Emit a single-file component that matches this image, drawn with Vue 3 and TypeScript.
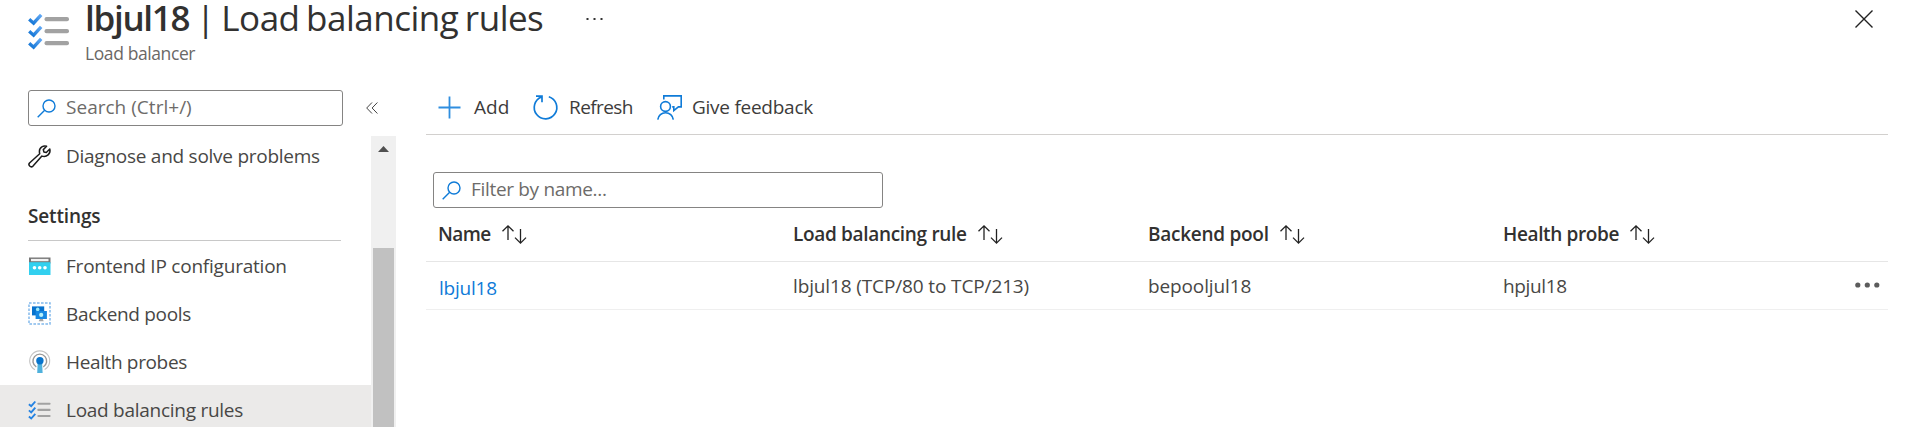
<script setup lang="ts">
interface NavItem {
  icon: 'frontend' | 'pools' | 'probes' | 'rules'
  label: string
  cls: string
  active?: boolean
}

const navItems: NavItem[] = [
  { icon: 'frontend', label: 'Frontend IP configuration', cls: 't22' },
  { icon: 'pools', label: 'Backend pools', cls: 't32' },
  { icon: 'probes', label: 'Health probes', cls: 't36' },
  { icon: 'rules', label: 'Load balancing rules', cls: 't27', active: true },
]

const columns = [
  { label: 'Name', cls: 't60' },
  { label: 'Load balancing rule', cls: 't32' },
  { label: 'Backend pool', cls: 't27' },
  { label: 'Health probe', cls: 't36' },
]
</script>

<template>
  <div class="page">
    <header class="head">
      <svg class="head-icon" viewBox="0 0 42 38">
        <defs>
          <linearGradient id="tick" x1="0" y1="1" x2="1" y2="0">
            <stop offset="0" stop-color="#0f73d4" />
            <stop offset="1" stop-color="#62a9f5" />
          </linearGradient>
        </defs>
        <g v-for="i in 3" :key="i" :transform="`translate(0 ${(i - 1) * 12})`">
          <path d="M1.2 6.3 5.6 10.2 13.2 1.8" fill="none" stroke="url(#tick)" stroke-width="3.3" />
          <rect x="16.5" y="4" width="24.5" height="4.2" rx="2" fill="#a2a2a2" />
        </g>
      </svg>
      <div class="head-text">
        <h1><b>lbjul18</b><span class="title-rest">| Load balancing rules</span></h1>
        <div class="subtitle">Load balancer</div>
      </div>
      <svg class="head-more" viewBox="0 0 18 4" fill="#333"><rect x="0.5" y="1" width="2" height="2" /><rect x="7.5" y="1" width="2" height="2" /><rect x="14.5" y="1" width="2" height="2" /></svg>
      <svg class="close" viewBox="0 0 18 18"><path d="M.5.5l17 17M17.5.5l-17 17" stroke="#222" stroke-width="1.4" /></svg>
    </header>

    <div class="body">
      <aside class="side">
        <div class="search-row">
          <div class="box search">
            <svg class="lens" viewBox="0 0 19 19" fill="none" stroke="#0f7bd8" stroke-width="1.4"><circle cx="12" cy="7" r="6" /><path d="M7.7 11.3.7 18.3" /></svg>
            <span class="t-search">Search (Ctrl+/)</span>
          </div>
          <svg class="collapse" viewBox="0 0 12 12" fill="none" stroke="#444" stroke-width="1"><path d="M6 .5.7 6 6 11.5M11.4.5 6.1 6l5.3 5.5" /></svg>
        </div>
        <div class="side-scroll">
          <nav>
            <div class="item first">
              <svg class="ico" viewBox="0 0 23 23" fill="none" stroke="#1b1b1b" stroke-width="1.5" stroke-linejoin="round"><path d="M18.6 1.3C15.6.2 11.3 2.2 11.4 6.4c0 1 .1 1.5.3 2.3L1.5 18c-1.8 2.1 1.2 5 3.3 3.3l9.1-10.2c4.8 1.6 9.1-2.4 7.900-7.200l-3.500 3.600-2.400-.5-.6-2.400z" /></svg>
              <span class="t26">Diagnose and solve problems</span>
            </div>
            <div class="section"><span>Settings</span></div>
            <div v-for="n in navItems" :key="n.label" class="item" :class="{ active: n.active }">
              <svg v-if="n.icon === 'frontend'" class="ico" viewBox="0 0 23 23">
                <rect x="1" y="3.5" width="21.5" height="6" fill="#767676" /><rect x="3" y="4.900" width="17.5" height="2.3" fill="#f2f2f2" />
                <rect x="1" y="8.200" width="21.5" height="12.800" fill="#32d0ef" />
                <g fill="#fff"><circle cx="6.5" cy="13.800" r="1.8" /><circle cx="11.7" cy="13.800" r="1.8" /><circle cx="17" cy="13.800" r="1.8" /></g>
              </svg>
              <svg v-else-if="n.icon === 'pools'" class="ico" viewBox="0 0 23 23">
                <rect x="1" y="1" width="21" height="21" fill="none" stroke="#83b9eb" stroke-width="1.5" stroke-dasharray="2.6 1.4" />
                <rect x="4" y="4.4" width="12.2" height="9" fill="#0772cd" />
                <circle cx="9.7" cy="7.4" r="1.8" fill="#9ce8fa" />
                <rect x="7.6" y="9" width="11.3" height="8" fill="#1688e2" />
                <circle cx="13.2" cy="12.9" r="2.1" fill="#b5f2fc" />
                <path d="M11.8 17h3l.9 2.3h-5z" fill="#a6a6a6" />
              </svg>
              <svg v-else-if="n.icon === 'probes'" class="ico" viewBox="0 0 23 23" fill="none">
                <path d="M7 19.7A10 10 0 1 1 16.6 19.6" stroke="#c5c5c5" stroke-width="1.1" />
                <path d="M8.3 17A6.9 6.9 0 1 1 15.3 17" stroke="#999" stroke-width="1.4" />
                <path d="M9.7 12h4.4l.5 11H9.2z" fill="#4fb1dc" /><circle cx="11.9" cy="10.7" r="3.7" fill="#0874cc" />
              </svg>
              <svg v-else class="ico" viewBox="0 0 23 23">
                <g v-for="i in 3" :key="i" :transform="`translate(0 ${1.2 + (i - 1) * 6.15})`">
                  <path d="M.9 5 3.2 7 7.3 2.3" fill="none" stroke="#2583e2" stroke-width="1.9" />
                  <rect x="9.3" y="3.500" width="13.3" height="2.100" rx="1" fill="#a2a2a2" />
                </g>
              </svg>
              <span :class="n.cls">{{ n.label }}</span>
            </div>
          </nav>
          <div class="scrollbar">
            <svg class="arrow" viewBox="0 0 11 6"><path d="M5.5 0 11 6H0z" fill="#505050" /></svg>
            <div class="thumb"></div>
          </div>
        </div>
      </aside>

      <main class="main">
        <div class="toolbar">
          <svg class="plus" viewBox="0 0 23 23"><path d="M11.5.5v22M.5 11.5h22" stroke="#2f8edf" stroke-width="1.8" /></svg>
          <span class="add">Add</span>
          <svg class="refresh" viewBox="0 0 25 25" fill="none" stroke="#0f7bd8" stroke-width="1.7"><path d="M15.8 1.7A11.3 11.3 0 1 1 8.4 2M3 1.2H9V7.2" /></svg>
          <span class="refresh-text">Refresh</span>
          <svg class="feedback" viewBox="0 0 25 25" fill="none" stroke="#0f7bd8" stroke-width="1.6"><circle cx="8.5" cy="11.5" r="4.9" /><path d="M.8 24.6a7.8 7.8 0 0 1 15.5 0M6.8 4.5V.9h17.4v11h-2.8l-4.6 3.7v-3.7h-1.6" /></svg>
          <span class="t26">Give feedback</span>
        </div>
        <div class="box filter">
          <svg class="lens" viewBox="0 0 19 19" fill="none" stroke="#0f7bd8" stroke-width="1.4"><circle cx="12" cy="7" r="6" /><path d="M7.7 11.3.7 18.3" /></svg>
          <span class="t32">Filter by name...</span>
        </div>
        <div class="grid-row grid-head">
          <div v-for="c in columns" :key="c.label" class="cell">
            <span :class="c.cls">{{ c.label }}</span>
            <svg class="sort" viewBox="0 0 24 19" fill="none" stroke="#222" stroke-width="1.3"><path d="M6 15V.8M.5 6.3 6 .8l5.5 5.5M18.5 4v14M13 12.6l5.5 5.5 5.5-5.5" /></svg>
          </div>
        </div>
        <div class="grid-row grid-data">
          <div class="cell link"><span class="t22">lbjul18</span></div>
          <div class="cell"><span class="t13">lbjul18 (TCP/80 to TCP/213)</span></div>
          <div class="cell"><span class="t13">bepooljul18</span></div>
          <div class="cell last"><span class="t36">hpjul18</span>
            <svg class="row-more" viewBox="0 0 25 6" fill="#5c5c5c"><circle cx="2.8" cy="3" r="2.6" /><circle cx="12.3" cy="3" r="2.6" /><circle cx="21.8" cy="3" r="2.6" /></svg>
          </div>
        </div>
      </main>
    </div>
  </div>
</template>

<style>
body {
  margin: 0;
  background: #fff;
  overflow: hidden;
}
</style>

<style scoped>
.page {
  height: 427px;
  overflow: hidden;
  display: flex;
  flex-direction: column;
  font: 19px/24px "Open Sans", "Noto Sans", sans-serif;
  color: #484745;
  background: #fff;
}
.page span { white-space: nowrap; }
svg { display: block; flex: none; overflow: visible; }
.t13 { letter-spacing: -0.13px; }
.t22 { letter-spacing: -0.22px; }
.t26 { letter-spacing: -0.26px; }
.t27 { letter-spacing: -0.27px; }
.t32 { letter-spacing: -0.32px; }
.t36 { letter-spacing: -0.36px; }
.t60 { letter-spacing: -0.6px; }
.t-search { letter-spacing: 0.02px; }

.head {
  height: 90px;
  flex: none;
  display: flex;
  align-items: flex-start;
  padding: 0 45px 0 28px;
}
.head-icon { width: 42px; height: 38px; margin-top: 13px; }
.head-text { margin-left: 15px; width: 501px; }
h1 {
  margin: 0;
  font-size: 35px;
  font-weight: 400;
  line-height: 36px;
  color: #323130;
  white-space: nowrap;
  display: flex;
}
h1 b { font-weight: 600; letter-spacing: -1.3px; width: 111px; }
.title-rest { letter-spacing: -0.5px; word-spacing: -2px; }
.subtitle { font-size: 17.5px; letter-spacing: -0.4px; margin-top: 5px; color: #6a6866; }
.head-more { width: 18px; height: 4px; margin-top: 17px; }
.close { width: 18px; height: 18px; margin: 10px 0 0 auto; }

.body { flex: 1; min-height: 0; display: flex; }
.side { width: 396px; flex: none; display: flex; flex-direction: column; }
.box {
  box-sizing: border-box;
  height: 36px;
  border: 1px solid #858483;
  border-radius: 3px;
  display: flex;
  align-items: center;
  color: #6d6b69;
}
.box span { padding-bottom: 2px; }
.lens { width: 19px; height: 19px; margin: 0 10px 0 8px; }
.search-row { display: flex; align-items: center; margin-left: 28px; height: 36px; }
.search { width: 315px; }
.collapse { width: 12px; height: 12px; margin-left: 23px; }
.side-scroll { flex: 1; min-height: 0; display: flex; margin-top: 5px; }
nav { width: 371px; overflow: hidden; padding-top: 1px; }
.item { height: 48px; display: flex; align-items: center; padding-left: 28px; }
.item span { padding-top: 2px; }
.item.first span { padding-top: 0; }
.item.active { background: #ebeae9; }
.ico { width: 23px; height: 23px; margin-right: 15px; }
.section {
  height: 61px;
  box-sizing: border-box;
  margin: 0 30px 0 28px;
  border-bottom: 1px solid #c8c8c8;
  font-weight: 600;
  color: #323130;
  letter-spacing: -0.15px;
  padding-top: 24px;
}
.scrollbar { width: 25px; margin-top: 5px; background: #f0f0f0; display: flex; flex-direction: column; align-items: center; }
.arrow { width: 11px; height: 6px; margin-top: 10px; }
.thumb { width: 21px; flex: 1; margin-top: 96px; background: #c1c1c1; }

.main { flex: 1; margin: 0 30px; display: flex; flex-direction: column; }
.toolbar { height: 45px; box-sizing: border-box; flex: none; display: flex; align-items: center; padding: 0 0 10px 12px; border-bottom: 1px solid #d2d0ce; color: #3d3c3b; }
.plus { width: 23px; height: 23px; margin-right: 13px; }
.add { width: 59px; }
.refresh { width: 25px; height: 25px; margin-right: 11px; }
.refresh-text { width: 88px; letter-spacing: -0.6px; }
.feedback { width: 25px; height: 25px; margin-right: 10px; }
.filter { width: 450px; flex: none; margin: 37px 0 0 7px; }
.grid-row { display: grid; grid-template-columns: 355px 355px 355px 1fr; padding-left: 12px; box-sizing: border-box; border-bottom: 1px solid #e6e6e6; }
.cell { display: flex; align-items: center; }
.grid-head { height: 54px; padding-bottom: 1px; font-weight: 600; color: #323130; }
.sort { width: 24px; height: 19px; margin-left: 11px; }
.grid-data { height: 48px; border-color: #efefef; }
.link { color: #0f7bd8; padding: 4px 0 0 1px; }
.last { justify-content: space-between; }
.row-more { width: 25px; height: 6px; margin-right: 8px; margin-bottom: 2px; }
</style>
